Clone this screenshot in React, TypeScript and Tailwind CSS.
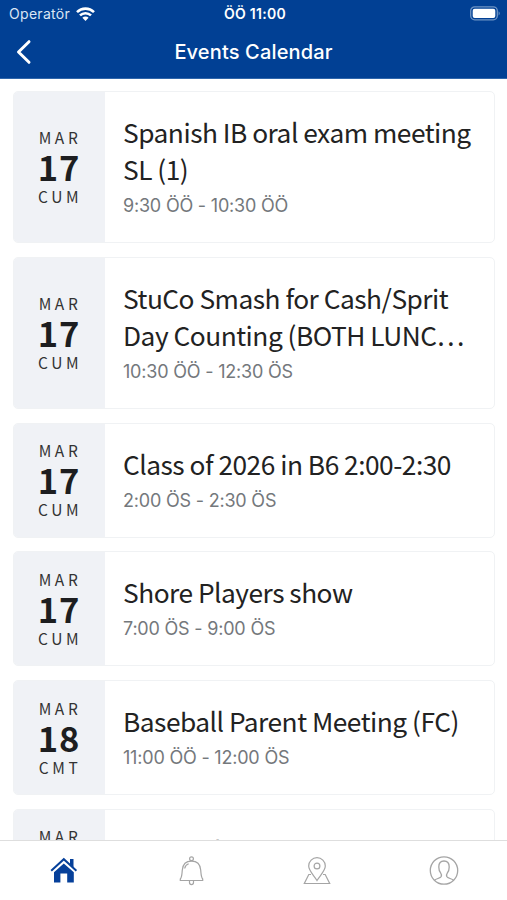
interface CalendarEvent {
  month: string
  day: string
  weekday: string
  title: string
  time: string
}

const events: CalendarEvent[] = [
  { month: "MAR", day: "17", weekday: "CUM", title: "Spanish IB oral exam meeting SL (1)", time: "9:30 ÖÖ - 10:30 ÖÖ" },
  { month: "MAR", day: "17", weekday: "CUM", title: "StuCo Smash for Cash/Sprit Day Counting (BOTH LUNC…", time: "10:30 ÖÖ - 12:30 ÖS" },
  { month: "MAR", day: "17", weekday: "CUM", title: "Class of 2026 in B6 2:00-2:30", time: "2:00 ÖS - 2:30 ÖS" },
  { month: "MAR", day: "17", weekday: "CUM", title: "Shore Players show", time: "7:00 ÖS - 9:00 ÖS" },
  { month: "MAR", day: "18", weekday: "CMT", title: "Baseball Parent Meeting (FC)", time: "11:00 ÖÖ - 12:00 ÖS" },
  { month: "MAR", day: "18", weekday: "CMT", title: "Shore Players show", time: "7:00 ÖS - 9:00 ÖS" },
]

const Header = () => {
  return (
    <header className="h-[79px] shrink-0 bg-[#014094] text-white border-b border-[#2f66ab]">
      <div className="grid h-[27px] grid-cols-3 items-center pl-[9px] pr-[7px]">
        <div className="flex items-center gap-[6px]">
          <span className="text-[14px] tracking-[0.3px] text-[#dbe6f5]">Operatör</span>
          <svg width="19" height="14" viewBox="0 0 19 14" fill="none" stroke="currentColor" strokeWidth="2.6">
            <path d="M1 5.1a12.2 12.2 0 0 1 17 0" />
            <path d="M4 8.4a8 8 0 0 1 11 0" />
            <path d="M6.4 10.8a4.4 4.4 0 0 1 6.2 0L9.5 13.9z" fill="currentColor" stroke="none" />
          </svg>
        </div>
        <span className="pl-px text-center text-[14px] font-semibold tracking-[0.3px]">ÖÖ 11:00</span>
        <svg className="justify-self-end" width="30" height="15" viewBox="0 0 30 15">
          <rect x="0.7" y="0.8" width="26.6" height="13" rx="4" fill="none" stroke="#6f94c4" strokeWidth="1.3" />
          <rect x="2.7" y="2.7" width="22.6" height="9.2" rx="2" fill="white" />
          <path d="M28.6 5.2c1.5.8 1.5 3.4 0 4.2z" fill="#6f94c4" />
        </svg>
      </div>
      <div className="grid h-[50px] grid-cols-[60px_1fr_60px] items-center">
        <svg className="ml-[15px]" width="18" height="26" viewBox="0 0 18 26" fill="none" stroke="currentColor" strokeWidth="3" strokeLinecap="round" strokeLinejoin="round">
          <path d="M14 2.7 3.5 13 14 23.3" />
        </svg>
        <h1 className="text-center text-[20px] font-medium tracking-[0.15px]">Events Calendar</h1>
      </div>
    </header>
  )
}

const EventCard = ({ event }: { event: CalendarEvent }) => {
  return (
    <li className="flex shrink-0 overflow-hidden rounded-[5px] border border-[#f0f2f4] bg-white">
      <div className="flex w-[91px] shrink-0 flex-col items-center justify-center bg-[#f0f2f6] pb-px pr-[2px] font-['Noto_Sans_CJK_JP',sans-serif] text-[#1d1e20]">
        <span className="pl-[3px] text-[15.5px] leading-[26px] tracking-[3.6px] text-[#333]">{event.month}</span>
        <span className="pl-px text-[34.5px] font-bold leading-[33px] tracking-[1px]">{event.day}</span>
        <span className="pl-[3px] text-[15.5px] leading-[26px] tracking-[3.6px] text-[#333]">{event.weekday}</span>
      </div>
      <div className="flex min-w-0 flex-1 flex-col pb-[23px] pl-[18px] pr-3 pt-[21px]">
        <h2 className="font-['Noto_Sans_CJK_JP',sans-serif] text-[26.3px] leading-[37px] tracking-[-0.5px] text-[#222]">{event.title}</h2>
        <p className="pt-[6px] text-[18px] leading-[26px] tracking-[-0.2px] text-[#74787c]">{event.time}</p>
      </div>
    </li>
  )
}

const TabBar = () => {
  return (
    <nav className="grid h-[60px] shrink-0 grid-cols-4 justify-items-center border-t border-[#dedede] bg-white pl-px pt-[14px] text-[#a5a5a5]">
      <svg width="30" height="32" viewBox="0 0 30 32" fill="#06409a">
        <path d="M21 4h3.5v8.5L21 9.2z" />
        <path d="M2.2 15.8 14.8 4.2l12.6 11.6" fill="none" stroke="#06409a" strokeWidth="2" />
        <path d="M5 17.2 14.8 8.4 24.8 17.2v10.3h-6.600v-9h-6.800v9H5z" />
      </svg>
      <svg width="30" height="32" viewBox="0 0 30 32" fill="none" stroke="currentColor" strokeWidth="1.2">
        <circle cx="15.5" cy="3.7" r="1.9" />
        <path d="M4.3 25.5V24c1.800-2 1.600-5.400 2-9 .5-5.600 3.700-8.800 9.200-8.800s8.700 3.200 9.200 8.800c.4 3.600.2 7 2 9v1.500z" />
        <path d="M8.700 13.500c.4-2.500 1.800-4 4-4.700" />
        <path d="M13.500 25.800v1.800a2 2 0 0 0 4 0v-1.800" />
      </svg>
      <svg width="30" height="32" viewBox="0 0 30 32" fill="none" stroke="currentColor" strokeWidth="1.2">
        <circle cx="15" cy="11" r="2.9" />
        <path d="M15 25.500c-3-5-8.300-9.800-8.300-14.500a8.300 8.300 0 0 1 16.600 0c0 4.700-5.300 9.500-8.300 14.500z" />
        <path d="M9 19.500H6.800L2.300 28.500h25.400l-4.500-9H21" />
      </svg>
      <svg width="30" height="32" viewBox="0 0 30 32" fill="none" stroke="currentColor" strokeWidth="1.3">
        <circle cx="15" cy="15.500" r="13.700" />
        <path d="M5.500 25.200c2-1.700 6-2 6.700-3.700.5-1.500.2-2.500-.6-3.600-1.300-1.700-1.800-3.700-1.800-6C9.800 8.200 11.800 6 15 6s5.200 2.200 5.200 5.900c0 2.300-.5 4.300-1.800 6-.8 1.100-1.100 2.100-.6 3.600.7 1.700 4.700 2 6.700 3.700" />
      </svg>
    </nav>
  )
}

const App = () => {
  return (
    <div className="flex h-[900px] w-[507px] flex-col overflow-hidden bg-white font-['Inter','Liberation_Sans',sans-serif]">
      <Header />
      <main className="min-h-0 flex-1 overflow-hidden">
        <ul className="flex flex-col gap-[13.8px] pl-[13px] pr-[12.5px] pt-[12px]">
          {events.map((event, index) => (
            <EventCard key={index} event={event} />
          ))}
        </ul>
      </main>
      <TabBar />
    </div>
  )
}

export default App
